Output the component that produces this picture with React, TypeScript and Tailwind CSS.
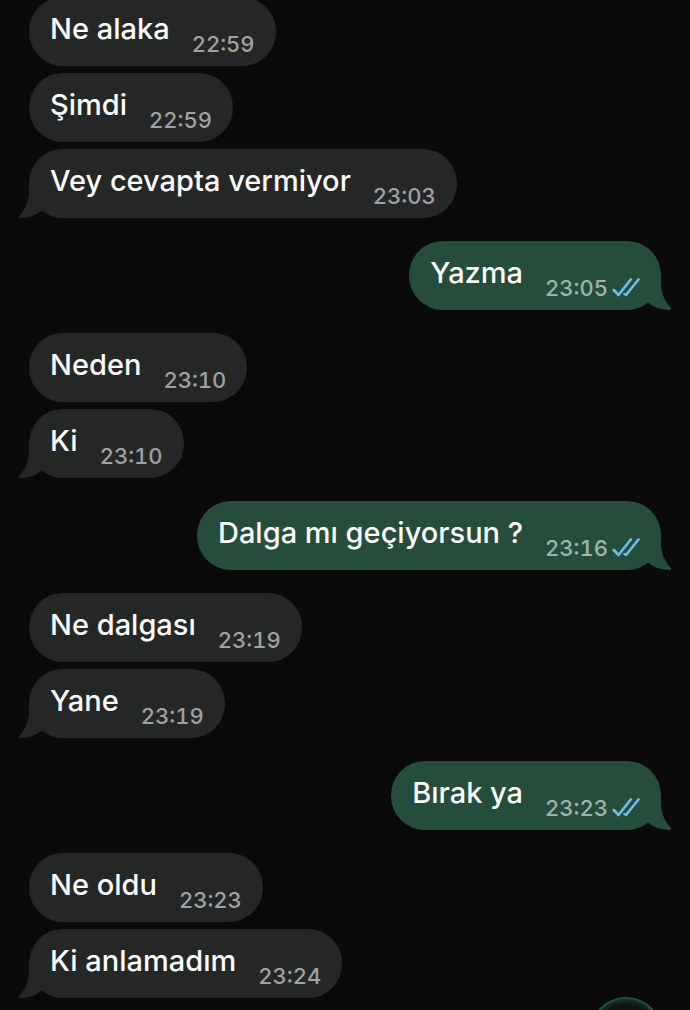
import clsx from "clsx";

type Message = { text: string; time: string };
type Group = { from: "them" | "me"; messages: Message[] };

const groups: Group[] = [
  {
    from: "them",
    messages: [
      { text: "Ne alaka", time: "22:59" },
      { text: "Şimdi", time: "22:59" },
      { text: "Vey cevapta vermiyor", time: "23:03" },
    ],
  },
  { from: "me", messages: [{ text: "Yazma", time: "23:05" }] },
  {
    from: "them",
    messages: [
      { text: "Neden", time: "23:10" },
      { text: "Ki", time: "23:10" },
    ],
  },
  { from: "me", messages: [{ text: "Dalga mı geçiyorsun ?", time: "23:16" }] },
  {
    from: "them",
    messages: [
      { text: "Ne dalgası", time: "23:19" },
      { text: "Yane", time: "23:19" },
    ],
  },
  { from: "me", messages: [{ text: "Bırak ya", time: "23:23" }] },
  {
    from: "them",
    messages: [
      { text: "Ne oldu", time: "23:23" },
      { text: "Ki anlamadım", time: "23:24" },
    ],
  },
];

function Tail({ mine }: { mine: boolean }) {
  return (
    <svg
      viewBox="0 0 32 36"
      aria-hidden="true"
      className={clsx(
        "absolute bottom-0 h-9 w-8 fill-current",
        mine ? "-right-2.5 -scale-x-100 text-[#264d3b]" : "-left-2.5 text-[#252727]",
      )}
    >
      <path d="M10 0V8C10 18 7 27 0 34C-.8 35 0 36 1 36C10 36 18 33 23 28.500L32 20V0Z" />
    </svg>
  );
}

function ReadTicks() {
  return (
    <svg
      viewBox="0 0 28 20"
      role="img"
      aria-label="Okundu"
      className="ml-1 h-5 w-7 fill-none stroke-[#6fbcf0] stroke-[2.6]"
      strokeLinecap="round"
      strokeLinejoin="round"
    >
      <path d="M1.800 12L6.500 17L18.800 1.500" />
      <path d="M12.500 16L14 17L26.500 1.500" />
    </svg>
  );
}

function Bubble({ message, mine, last }: { message: Message; mine: boolean; last: boolean }) {
  return (
    <li
      className={clsx(
        "relative flex h-[69px] max-w-full items-end rounded-[34px] px-[21px]",
        mine ? "bg-[#264d3b]" : "bg-[#252727]",
      )}
    >
      {last && <Tail mine={mine} />}
      <p className="relative pb-[19px] text-[29px] leading-9 font-medium whitespace-nowrap text-[#fafafa]">{message.text}</p>
      <div className="relative ml-[22px] flex items-center pb-[10px]">
        <time
          className={clsx(
            "text-[22px] leading-6 font-medium tabular-nums",
            mine ? "text-[#a0b3aa]" : "text-[#a0a1a1]",
          )}
        >
          {message.time}
        </time>
        {mine && <ReadTicks />}
      </div>
    </li>
  );
}

export default function App() {
  return (
    <main className="relative h-screen overflow-hidden bg-[#0a0a0a] font-['Inter',sans-serif]">
      <div className="-mt-[3px] flex flex-col gap-[23px] px-[29px]">
        {groups.map((group, g) => (
          <ul key={g} className={clsx("flex flex-col gap-[7px]", group.from === "me" ? "items-end" : "items-start")}>
            {group.messages.map((m, i) => (
              <Bubble key={i} message={m} mine={group.from === "me"} last={i === group.messages.length - 1} />
            ))}
          </ul>
        ))}
      </div>

      {/* Scroll to bottom, mostly below the fold */}
      <button
        type="button"
        aria-label="En alta git"
        className="absolute right-7 -bottom-[59px] size-[72px] rounded-full border-2 border-[#1f5540] bg-[#101413] shadow-[inset_0_0_6px_#1f5540]"
      />
    </main>
  );
}
